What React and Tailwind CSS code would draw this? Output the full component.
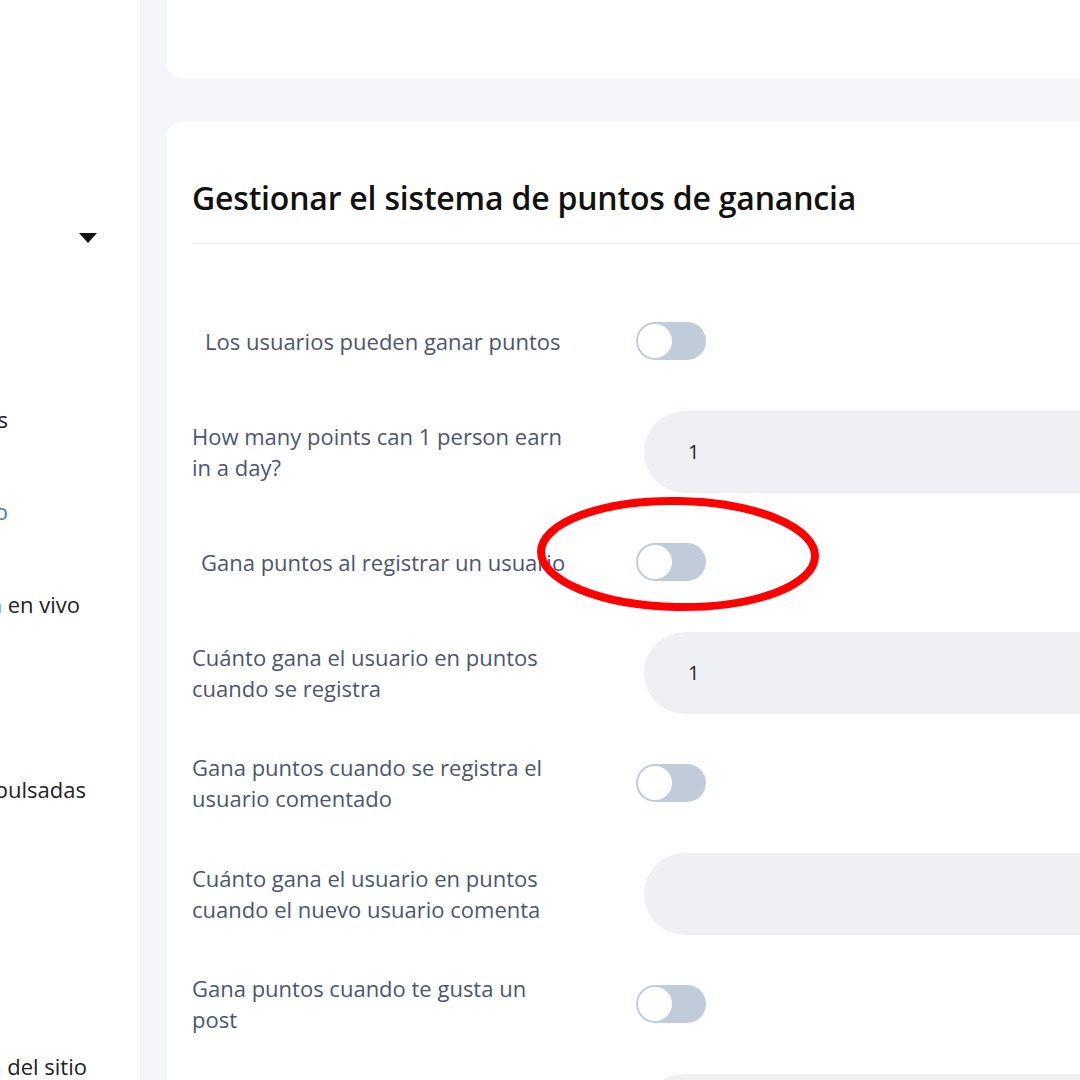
const FONT = { fontFamily: '"Open Sans", "Noto Sans", sans-serif' };

const sideItems = [
  { text: 'Usuarios', end: 'w-[8px]', cls: 'text-[#222]' },
  { text: 'Inicio', end: 'w-[8px]', cls: 'text-[#3b7dc4]' },
  { text: 'Transmisión en vivo', end: 'w-[80px]', cls: 'text-[#222]' },
  { text: '' },
  { text: 'Publicaciones impulsadas', end: 'w-[86px]', cls: 'text-[#222]' },
  { text: '' },
  { text: '' },
  { text: 'Configuración del sitio', end: 'w-[87px]', cls: 'text-[#222]' },
];

const rows = [
  { label: 'Los usuarios pueden ganar puntos', type: 'toggle', pad: 'pl-[13px]' },
  { label: 'How many points can 1 person earn in a day?', type: 'input', value: '1' },
  { label: 'Gana puntos al registrar un usuario', type: 'toggle', pad: 'pl-[9px]' },
  { label: 'Cuánto gana el usuario en puntos cuando se registra', type: 'input', value: '1' },
  { label: 'Gana puntos cuando se registra el usuario comentado', type: 'toggle' },
  { label: 'Cuánto gana el usuario en puntos cuando el nuevo usuario comenta', type: 'input', value: '' },
  { label: 'Gana puntos cuando te gusta un post', type: 'toggle' },
  { label: 'Cuánto gana el usuario en puntos cuando le gusta un post', type: 'input', value: '' },
];

function Toggle() {
  return (
    <div className="w-[70px] h-[38px] rounded-full bg-[#c1ccda] p-[2px] flex items-center">
      <div className="w-[34px] h-[34px] rounded-full bg-white" />
    </div>
  );
}

function PointsInput({ value }) {
  return (
    <div className="ml-[8px] flex-1 h-[82px] rounded-l-full bg-[#eff0f4] flex items-center pl-[44px] text-[20px] text-[#1f2328]">
      {value}
    </div>
  );
}

export default function App() {
  return (
    <div className="w-[1080px] h-[1080px] overflow-hidden flex items-start bg-[#f5f6fa] relative" style={FONT}>
      {/* sidebar, scrolled so only the tail of each label shows */}
      <aside className="w-[141px] h-[1080px] shrink-0 bg-white border-r border-[#eef0f4] overflow-hidden pt-[192px] text-[22px]">
        <div className="flex justify-end pr-[43px] h-[181px] items-start pt-[41px]">
          <svg width="18" height="11" viewBox="0 0 18 11">
            <path d="M0 0 H18 L9 10 Z" fill="#111" />
          </svg>
        </div>
        {sideItems.map((item, i) => (
          <div key={i} className="h-[92.5px] flex items-center">
            {item.text && (
              <div className={`${item.end} flex justify-end`}>
                <span className={`whitespace-nowrap ${item.cls}`}>{item.text}</span>
              </div>
            )}
          </div>
        ))}
      </aside>

      <main className="flex-1 pl-[26px] flex flex-col gap-[44px]">
        <div className="-mt-[40px] h-[118px] shrink-0 w-[1000px] bg-white rounded-[14px]" />

        <section className="w-[1000px] shrink-0 bg-white rounded-[14px] pl-[25px] pt-[56px] pb-[40px]">
          <h1 className="text-[32px] font-semibold text-[#111] leading-[40px] tracking-[-0.2px]">
            Gestionar el sistema de puntos de ganancia
          </h1>
          <div className="mt-[25px] h-px bg-[#f0f1f3]" />

          <div className="pt-[56px] flex flex-col gap-[28.5px]">
            {rows.map((row, i) => (
              <div key={i} className="flex items-center h-[82px] shrink-0">
                <div className={`w-[444px] shrink-0 pr-[62px] text-[22px] leading-[31px] text-[#4b5670] ${row.pad || ''}`}>
                  {row.label}
                </div>
                {row.type === 'toggle' ? <Toggle /> : <PointsInput value={row.value} />}
              </div>
            ))}
          </div>
        </section>
      </main>

      {/* red annotation ring */}
      <svg className="absolute left-[530px] top-[490px] pointer-events-none" width="300" height="130" viewBox="0 0 300 130">
        <ellipse cx="148" cy="64" rx="137" ry="53" fill="none" stroke="#ff0000" strokeWidth="8" transform="rotate(1 148 64)" />
      </svg>
    </div>
  );
}
